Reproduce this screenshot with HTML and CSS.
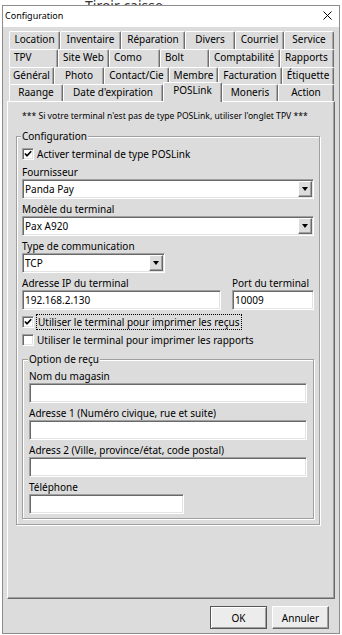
FILE: index.html
```html
<!DOCTYPE html>
<html lang="fr">
<head>
    <meta charset="UTF-8">
    <meta name="viewport" content="width=device-width, initial-scale=1.0">
    <title>Configuration</title>
    <link rel="stylesheet" href="styles.css">
</head>
<body>
    <div class="backdrop">Tiroir caisse</div>

    <div class="window">
        <div class="titlebar">
            <span class="title">Configuration</span>
            <svg class="close" width="9" height="9" viewBox="0 0 9 9">
                <path d="M0.5 0.5 L8.5 8.5 M8.5 0.5 L0.5 8.5" stroke="#000" stroke-width="1" fill="none"/>
            </svg>
        </div>

        <div class="dialog">
            <div class="tabs">
                <div class="tab-row row1">
                    <div class="tab">Location</div>
                    <div class="tab">Inventaire</div>
                    <div class="tab">Réparation</div>
                    <div class="tab">Divers</div>
                    <div class="tab">Courriel</div>
                    <div class="tab">Service</div>
                </div>
                <div class="tab-row row2">
                    <div class="tab">TPV</div>
                    <div class="tab">Site Web</div>
                    <div class="tab">Como</div>
                    <div class="tab">Bolt</div>
                    <div class="tab">Comptabilité</div>
                    <div class="tab">Rapports</div>
                </div>
                <div class="tab-row row3">
                    <div class="tab">Général</div>
                    <div class="tab">Photo</div>
                    <div class="tab">Contact/Cie</div>
                    <div class="tab">Membre</div>
                    <div class="tab">Facturation</div>
                    <div class="tab">Étiquette</div>
                </div>
                <div class="tab-row row4">
                    <div class="tab">Raange</div>
                    <div class="tab">Date d'expiration</div>
                    <div class="tab active">POSLink</div>
                    <div class="tab">Moneris</div>
                    <div class="tab">Action</div>
                </div>
            </div>

            <div class="panel">
                <p class="notice">*** Si votre terminal n'est pas de type POSLink, utiliser l'onglet TPV ***</p>

                <fieldset class="group">
                    <legend>Configuration</legend>

                    <div class="check">
                        <span class="box"><svg width="8" height="8" viewBox="0 0 8 8"><path d="M1 3.5 L3 5.8 L7.2 1.2" stroke="#000" stroke-width="1.7" fill="none"/></svg></span>
                        <span>Activer terminal de type POSLink</span>
                    </div>

                    <div class="field first">
                        <div class="label">Fournisseur</div>
                        <div class="select"><span class="value">Panda Pay</span><span class="drop"></span></div>
                    </div>

                    <div class="field">
                        <div class="label">Modèle du terminal</div>
                        <div class="select"><span class="value">Pax A920</span><span class="drop"></span></div>
                    </div>

                    <div class="field">
                        <div class="label">Type de communication</div>
                        <div class="select short"><span class="value">TCP</span><span class="drop"></span></div>
                    </div>

                    <div class="field pair">
                        <div class="ip">
                            <div class="label">Adresse IP du terminal</div>
                            <div class="input">192.168.2.130</div>
                        </div>
                        <div class="port">
                            <div class="label">Port du terminal</div>
                            <div class="input">10009</div>
                        </div>
                    </div>

                    <div class="check spaced">
                        <span class="box"><svg width="8" height="8" viewBox="0 0 8 8"><path d="M1 3.5 L3 5.8 L7.2 1.2" stroke="#000" stroke-width="1.7" fill="none"/></svg></span>
                        <span class="focus">Utiliser le terminal pour imprimer les reçus</span>
                    </div>

                    <div class="check spaced">
                        <span class="box"></span>
                        <span>Utiliser le terminal pour imprimer les rapports</span>
                    </div>

                    <fieldset class="group inner">
                        <legend>Option de reçu</legend>

                        <div class="field top">
                            <div class="label">Nom du magasin</div>
                            <div class="input"></div>
                        </div>
                        <div class="field">
                            <div class="label">Adresse 1 (Numéro civique, rue et suite)</div>
                            <div class="input"></div>
                        </div>
                        <div class="field">
                            <div class="label">Adress 2 (Ville, province/état, code postal)</div>
                            <div class="input"></div>
                        </div>
                        <div class="field">
                            <div class="label">Téléphone</div>
                            <div class="input phone"></div>
                        </div>
                    </fieldset>
                </fieldset>
            </div>

            <div class="footer">
                <div class="btn default">OK</div>
                <div class="btn">Annuler</div>
            </div>
        </div>
    </div>
</body>
</html>
```

FILE: styles.css
```css
body {
    margin: 0;
    background-color: #fff;
    font-family: 'Noto Sans', sans-serif;
    font-size: 10px;
    color: #000;
}

.backdrop {
    height: 5px;
    overflow: hidden;
    padding-left: 85px;
    font-size: 14px;
    line-height: 11px;
    color: #333;
}

.window {
    margin-left: 2px;
    width: 338px;
    height: 629px;
    box-sizing: border-box;
    border: 1px solid #8c8c8c;
    background-color: #dcdcdc;
    display: flex;
    flex-direction: column;
}

.titlebar {
    height: 21px;
    background-color: #fff;
    display: flex;
    align-items: center;
    justify-content: space-between;
    padding: 0 7px 2px 2px;
    box-sizing: border-box;
}

.title {
    font-size: 9px;
}

.dialog {
    flex: 1;
    display: flex;
    flex-direction: column;
    padding: 4px 4px 4px 4px;
}

/* onglets */

.tabs {
    margin: 0 1px 0 2px;
}

.tab-row {
    display: flex;
    height: 17px;
}

.row1, .row2 {
    height: 18px;
}

.tab {
    box-sizing: border-box;
    height: 100%;
    border-top: 1px solid #fff;
    border-left: 1px solid #fff;
    border-right: 1px solid #6e6e6e;
    box-shadow: inset -1px 0 0 #a8a8a8;
    border-radius: 2px 2px 0 0;
    text-align: center;
    white-space: nowrap;
    line-height: 15px;
}

.row2 .tab {
    text-align: left;
    padding-left: 4px;
}

.tab.active {
    position: relative;
    z-index: 1;
    margin-top: -2px;
    height: 20px;
    padding-bottom: 3px;
    background-color: #dcdcdc;
}

.row1 .tab:nth-child(1) { width: 51px; }
.row1 .tab:nth-child(2) { width: 61px; }
.row1 .tab:nth-child(3) { width: 64px; }
.row1 .tab:nth-child(4) { width: 50px; }
.row1 .tab:nth-child(5) { width: 49px; }
.row1 .tab:nth-child(6) { width: 50px; }

.row2 .tab:nth-child(1) { width: 49px; }
.row2 .tab:nth-child(2) { width: 51px; }
.row2 .tab:nth-child(3) { width: 51px; }
.row2 .tab:nth-child(4) { width: 49px; }
.row2 .tab:nth-child(5) { width: 71px; }
.row2 .tab:nth-child(6) { width: 54px; }

.row3 .tab:nth-child(1) { width: 45px; }
.row3 .tab:nth-child(2) { width: 50px; }
.row3 .tab:nth-child(3) { width: 65px; }
.row3 .tab:nth-child(4) { width: 49px; }
.row3 .tab:nth-child(5) { width: 64px; }
.row3 .tab:nth-child(6) { width: 52px; }

.row4 .tab:nth-child(1) { width: 54px; }
.row4 .tab:nth-child(2) { width: 100px; }
.row4 .tab:nth-child(3) { width: 59px; }
.row4 .tab:nth-child(4) { width: 56px; }
.row4 .tab:nth-child(5) { width: 56px; }

/* panneau */

.panel {
    flex: 1;
    padding: 0 8px;
    border-top: 1px solid #fff;
    border-left: 1px solid #fff;
    border-right: 1px solid #696969;
    border-bottom: 1px solid #696969;
    box-shadow: inset -1px -1px 0 #a0a0a0;
}

.notice {
    margin: 8px 0 8px 6px;
    font-size: 8.6px;
    line-height: 12px;
    white-space: nowrap;
}

.group {
    margin: 0;
    width: 304px;
    min-inline-size: 0;
    box-sizing: border-box;
    border: 1px solid #a0a0a0;
    box-shadow: 1px 1px 0 #fff, inset 1px 1px 0 #fff;
    padding: 4px 5px 5px 5px;
}

.group legend {
    padding: 0 1px;
    margin-left: -1px;
    line-height: 13px;
    background-color: #dcdcdc;
}

.group.inner {
    width: 100%;
    margin-top: 7px;
    padding: 4px 6px 4px 6px;
}

.label {
    line-height: 13px;
    white-space: nowrap;
}

.field {
    margin-top: 4px;
}

.field.first {
    margin-top: 6px;
}

.field.top {
    margin-top: 0;
}

.pair {
    display: flex;
    justify-content: space-between;
}

.ip {
    width: 199px;
}

.port {
    width: 82px;
}

.input, .select {
    height: 20px;
    box-sizing: border-box;
    background-color: #fff;
    border: 1px solid;
    border-color: #a0a0a0 #fff #fff #a0a0a0;
    box-shadow: inset 1px 1px 0 #696969, inset -1px -1px 0 #e3e3e3;
    line-height: 18px;
    padding-left: 2px;
    white-space: nowrap;
}

.input.phone {
    width: 155px;
}

.select {
    display: flex;
    padding: 1px;
}

.select.short {
    width: 143px;
}

.select .value {
    flex: 1;
    line-height: 16px;
    padding-left: 1px;
}

.drop {
    width: 14px;
    box-sizing: border-box;
    background-color: #dcdcdc;
    border: 1px solid;
    border-color: #fff #696969 #696969 #fff;
    box-shadow: inset -1px -1px 0 #a0a0a0;
    display: flex;
    align-items: center;
    justify-content: center;
}

.drop::after {
    content: "";
    border-style: solid;
    border-width: 4px 3.5px 0 3.5px;
    border-color: #000 transparent transparent transparent;
}

/* cases a cocher */

.check {
    display: flex;
    align-items: center;
    gap: 3px;
    height: 13px;
    white-space: nowrap;
}

.check.spaced {
    margin-top: 5px;
}

.box {
    width: 12px;
    height: 12px;
    box-sizing: border-box;
    background-color: #fff;
    border: 1px solid;
    border-color: #a0a0a0 #fff #fff #a0a0a0;
    box-shadow: inset 1px 1px 0 #696969, inset -1px -1px 0 #e3e3e3;
    display: flex;
    align-items: center;
    justify-content: center;
}

.focus {
    outline: 1px dotted #000;
    padding: 0 1px;
}

/* boutons */

.footer {
    display: flex;
    justify-content: flex-end;
    gap: 5px;
    padding: 7px 6px 0 0;
}

.btn {
    width: 57px;
    height: 23px;
    box-sizing: border-box;
    background-color: #ececec;
    border: 1px solid;
    border-color: #fff #696969 #696969 #fff;
    box-shadow: inset -1px -1px 0 #a0a0a0;
    display: flex;
    align-items: center;
    justify-content: center;
}

.btn.default {
    border-color: #555;
    box-shadow: inset 1px 1px 0 #fff, inset -1px -1px 0 #a0a0a0;
}
```
